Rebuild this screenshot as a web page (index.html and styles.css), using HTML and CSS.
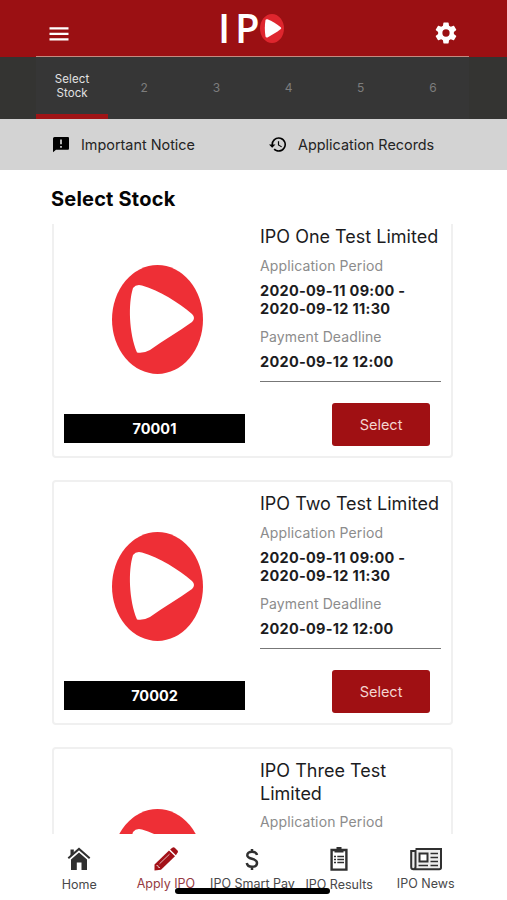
FILE: index.html
```html
<!DOCTYPE html>
<html lang="en">
<head>
<meta charset="utf-8">
<title>IPO - Select Stock</title>
<link rel="stylesheet" href="styles.css">
</head>
<body>
<svg width="0" height="0" class="defs">
  <symbol id="logo" viewBox="0 0 91 109" preserveAspectRatio="none">
    <ellipse cx="45.5" cy="54.5" rx="45.5" ry="54.5" fill="#ee2f36"/>
    <path d="M21 23Q24 19 30 20.500C48 26 66 37 80 49Q84 53 80 57C66 67 52 75 38 85Q32 88.500 25 87.500C17 68 16 39 21 23Z" fill="#fff"/>
  </symbol>
</svg>
<div class="app">
  <header class="topbar">
    <div class="inner topbar-row">
      <svg class="menu" viewBox="0 0 20 14"><path d="M.5 1.300H19.500M.5 6.800H19.500M.5 12.300H19.500" stroke="#fff" stroke-width="2.300"/></svg>
      <div class="brand"><span class="brand-i">I</span><span class="brand-p">P</span><svg class="brand-o" viewBox="0 0 24 29"><ellipse cx="12" cy="14.500" rx="12" ry="14.500" fill="#de262e"/><path d="M5.500 6Q6 4.800 7.500 5.300C12 7 17 10 21 13.500Q21.600 14.300 20.800 15C16.500 18.500 12 21 7.500 23.400Q6 24 5.500 22.500C4.600 17 4.600 11 5.500 6Z" fill="#fff"/></svg></div>
      <svg class="gear" viewBox="2 2 20 20"><path fill="#fff" d="M19.140 12.940c.04-.3.060-.610.060-.940s-.020-.640-.070-.940l2.030-1.580c.180-.140.230-.410.120-.610l-1.920-3.320c-.120-.220-.370-.290-.590-.220l-2.390.96c-.5-.380-1.030-.7-1.620-.940L14.400 2.810c-.040-.240-.240-.410-.480-.410h-3.840c-.240 0-.430.170-.470.410L9.250 5.350c-.590.240-1.130.570-1.620.940L5.240 5.330c-.220-.080-.470 0-.590.220L2.740 8.870c-.120.210-.080.470.120.610l2.030 1.580c-.050.300-.090.630-.090.940s.020.640.070.940l-2.030 1.580c-.180.140-.230.410-.120.610l1.920 3.320c.12.220.370.290.590.220l2.390-.96c.5.380 1.030.7 1.620.940l.36 2.540c.05.240.240.410.480.410h3.840c.240 0 .440-.17.470-.41l.36-2.540c.590-.240 1.130-.560 1.620-.940l2.390.96c.22.080.470 0 .590-.22l1.920-3.320c.12-.22.070-.470-.12-.61zM12 15.300A3.300 3.300 0 1 1 12 8.700a3.300 3.300 0 0 1 0 6.600z"/></svg>
    </div>
  </header>
  <div class="steps">
    <ol class="inner step-list">
      <li class="active">Select<br>Stock</li><li>2</li><li>3</li><li>4</li><li>5</li><li>6</li>
    </ol>
  </div>
  <div class="links">
    <div class="link notice"><svg viewBox="0 0 16 15"><path d="M1.500 0H15Q16 0 16 1.200V11.500Q16 12.800 15 12.800H3L0 15.200V1.500Q0 0 1.500 0Z"/><path d="M8 2.500V7.200M8 9V10.800" stroke="#d3d3d3" stroke-width="1.700"/></svg>Important Notice</div>
    <div class="link records"><svg viewBox="1 3 21 18"><path d="M13 3a9 9 0 0 0-9 9H1l3.890 3.890.07.140L9 12H6a7 7 0 1 1 2.060 4.940l-1.420 1.420A9 9 0 1 0 13 3zm-1 5v5l4.280 2.540.72-1.210-3.500-2.080V8z"/></svg>Application Records</div>
  </div>
  <h1>Select Stock</h1>
  <main class="list">
    <article class="card">
      <div class="visual"><svg class="pic"><use href="#logo"/></svg><div class="code">70001</div></div>
      <div class="info">
        <h2>IPO One Test Limited</h2>
        <p class="label">Application Period</p><p class="value">2020-09-11 09:00 -<br>2020-09-12 11:30</p>
        <p class="label pay">Payment Deadline</p><p class="value">2020-09-12 12:00</p>
        <hr><button>Select</button>
      </div>
    </article>
    <article class="card">
      <div class="visual"><svg class="pic"><use href="#logo"/></svg><div class="code">70002</div></div>
      <div class="info">
        <h2>IPO Two Test Limited</h2>
        <p class="label">Application Period</p><p class="value">2020-09-11 09:00 -<br>2020-09-12 11:30</p>
        <p class="label pay">Payment Deadline</p><p class="value">2020-09-12 12:00</p>
        <hr><button>Select</button>
      </div>
    </article>
    <article class="card tall">
      <div class="visual"><svg class="pic"><use href="#logo"/></svg></div>
      <div class="info">
        <h2>IPO Three Test<br>Limited</h2>
        <p class="label">Application Period</p>
      </div>
    </article>
  </main>
  <nav class="tabs">
    <a class="tab"><svg width="24" height="24" viewBox="0 0 24 24"><path fill="#303030" d="M4 12.500 12 5.500 20 12.500V23H14.500V15.500H9.800V23H4Z"/><path fill="#303030" d="M3.500 2.500H6.800V6L3.500 9Z"/><path d="M1.300 11.200 12 1.900 22.700 11.200" fill="none" stroke="#303030" stroke-width="2"/></svg><span>Home</span></a>
    <a class="tab current"><svg width="24" height="24" viewBox="0 0 24 24"><g fill="#a31219"><path d="M.5 17.500 15 3.500 21 9.300 7 22.800 .5 23.500Z"/><path d="M16.100 2.600 18.300.8Q19.800-.2 21 1L23.500 3.500Q24.500 4.800 23.300 6L21.900 8.200Z"/></g><path d="M5.500 16.800 15.500 7.200M2.500 18.500 4 18.700 4.400 20.300 6 20.600" stroke="#f6dede" stroke-width=".8" fill="none"/></svg><span>Apply IPO</span></a>
    <a class="tab"><svg width="24" height="24" viewBox="0 0 24 24"><path fill="none" stroke="#303030" stroke-width="2.500" d="M17 8C16.500 5.700 14.800 4.700 12 4.700 9 4.700 7.300 6 7.300 8.200 7.300 13 17 10.500 17 16 17 18.500 15 19.800 12 19.800 9 19.800 7.200 18.500 6.800 16M12 2V5M12 19.500V23"/></svg><span>IPO Smart Pay</span></a>
    <a class="tab"><svg width="24" height="24" viewBox="0 0 24 24"><path d="M4.600 3H19.400V22.600H4.600Z" fill="none" stroke="#303030" stroke-width="2.400"/><path fill="#303030" d="M7.500 2H9.500V0H14.500V2H16.500V5.500H7.500Z"/><path d="M7 9.500H9M7 12.500H9M7 15.500H9M10.300 9.500H17M10.300 12.500H17M10.300 15.500H17" stroke="#303030" stroke-width="1.300"/></svg><span>IPO Results</span></a>
    <a class="tab"><svg width="32" height="24" viewBox="0 0 32 24"><path d="M5.500 2H31V20.500Q31 22.200 29.300 22.200H3.500Q1.200 22.200 1.200 20V4H5.500V20Q5.500 22 3.500 22" fill="#eee" stroke="#303030" stroke-width="2"/><path d="M9.500 6.500H17.500V14.500H9.500Z" fill="#fff" stroke="#303030" stroke-width="2"/><path d="M20.500 6.500H28M20.500 10.500H28M20.500 14.500H28M8.500 18.500H18M20.500 18.500H28" stroke="#303030" stroke-width="1.700"/></svg><span>IPO News</span></a>
    <div class="home-indicator"></div>
  </nav>
</div>
</body>
</html>
```

FILE: styles.css
```css
* { box-sizing: border-box; }
body { margin: 0; background: #fff; color: #1c1c1e; font-family: Inter, "Liberation Sans", sans-serif; }
h1, h2, p, ol { margin: 0; padding: 0; font-weight: 400; }
.defs { display: block; height: 0; }
.app { width: 507px; height: 900px; display: flex; flex-direction: column; overflow: hidden; }
.inner { width: 433px; margin-left: 36px; }
.topbar { height: 57px; background: #9b1013; flex: none; }
.topbar-row { height: 57px; display: flex; justify-content: space-between; align-items: flex-start; border-bottom: 1px solid #c58a80; padding: 0 12px 0 13px; }
.menu { width: 20px; height: 14px; margin-top: 27px; }
.gear { width: 22px; height: 22px; margin-top: 22px; }
.brand { display: flex; align-items: flex-start; color: #fff; margin-top: 14px; height: 30px; margin-right: 2px; }
.brand span { font: 600 40px/28px "Open Sans", sans-serif; }
.brand-i { width: 17px; }
.brand-p { width: 25px; }
.brand-o { width: 24px; height: 29px; }
.steps { height: 62px; background: #343432; flex: none; }
.step-list { display: grid; grid-template-columns: repeat(6, 1fr); height: 62px; background: #363636; list-style: none; }
.step-list li { display: flex; align-items: center; justify-content: center; text-align: center; font-size: 12px; line-height: 14px; color: #7d7d7d; border-bottom: 5px solid transparent; padding-top: 5px; }
.step-list .active { font-size: 11.500px; color: #e2e2e2; border-color: #a01416; padding-top: 0; letter-spacing: .1px; }
.links { height: 51px; background: #d3d3d3; flex: none; display: flex; align-items: center; padding-left: 53px; font-size: 14.400px; color: #242424; }
.link { display: flex; align-items: center; white-space: nowrap; }
.notice { width: 216px; gap: 12px; }
.notice svg { width: 16px; height: 15px; overflow: visible; }
.records { gap: 12px; }
.records svg { width: 17px; height: 15px; }
h1 { font-size: 20px; line-height: 24px; font-weight: 700; color: #050505; margin: 17px 0 13px 51px; flex: none; letter-spacing: .2px; }
.list { height: 610px; flex: none; overflow: hidden; padding-left: 52px; }
.card { width: 401px; height: 245px; margin-bottom: 22px; border: 2px solid #f0f0f0; border-radius: 4px; padding: 11px 10px; display: flex; gap: 15px; }
.card:first-child { margin-top: -11px; }
.visual { width: 181px; display: flex; flex-direction: column; align-items: center; padding-top: 39px; }
.tall .visual { padding-top: 49px; }
.pic { width: 91px; height: 109px; margin-left: 6px; }
.code { width: 181px; height: 29px; margin-top: 40px; background: #000; color: #fff; font-size: 14.500px; font-weight: 700; line-height: 29px; text-align: center; }
.info { width: 181px; display: flex; flex-direction: column; }
.info h2 { font-size: 18px; line-height: 22.500px; white-space: nowrap; }
.label { font-size: 14px; line-height: 18px; color: #8c8c8c; margin-top: 8px; letter-spacing: .12px; }
.value { font-size: 14.500px; line-height: 18px; font-weight: 700; margin-top: 7px; white-space: nowrap; letter-spacing: .28px; }
.pay { margin-top: 10px; }
hr { width: 181px; border: 0; height: 1px; flex: none; background: #777; margin: 10px 0 21px; }
button { width: 98px; height: 43px; margin-left: 72px; background: #a01013; border: 0; border-radius: 3px; color: #f4d5d1; font: 400 14.500px Inter, sans-serif; padding: 0; flex: none; }
.tabs { height: 66px; position: relative; display: flex; padding-left: 36px; background: #fff; flex: none; }
.tab { width: 86.600px; height: 66px; display: flex; flex-direction: column; align-items: center; padding-top: 13px; font-size: 12.500px; line-height: 16px; color: #48484a; white-space: nowrap; }
.tab span { margin-top: 5px; }
.tab:first-child span, .tab:nth-child(4) span { margin-top: 6px; }
.current { color: #963b43; }
.home-indicator { position: absolute; left: 175px; top: 54px; width: 155px; height: 6px; border-radius: 3px; background: #000; }
```
